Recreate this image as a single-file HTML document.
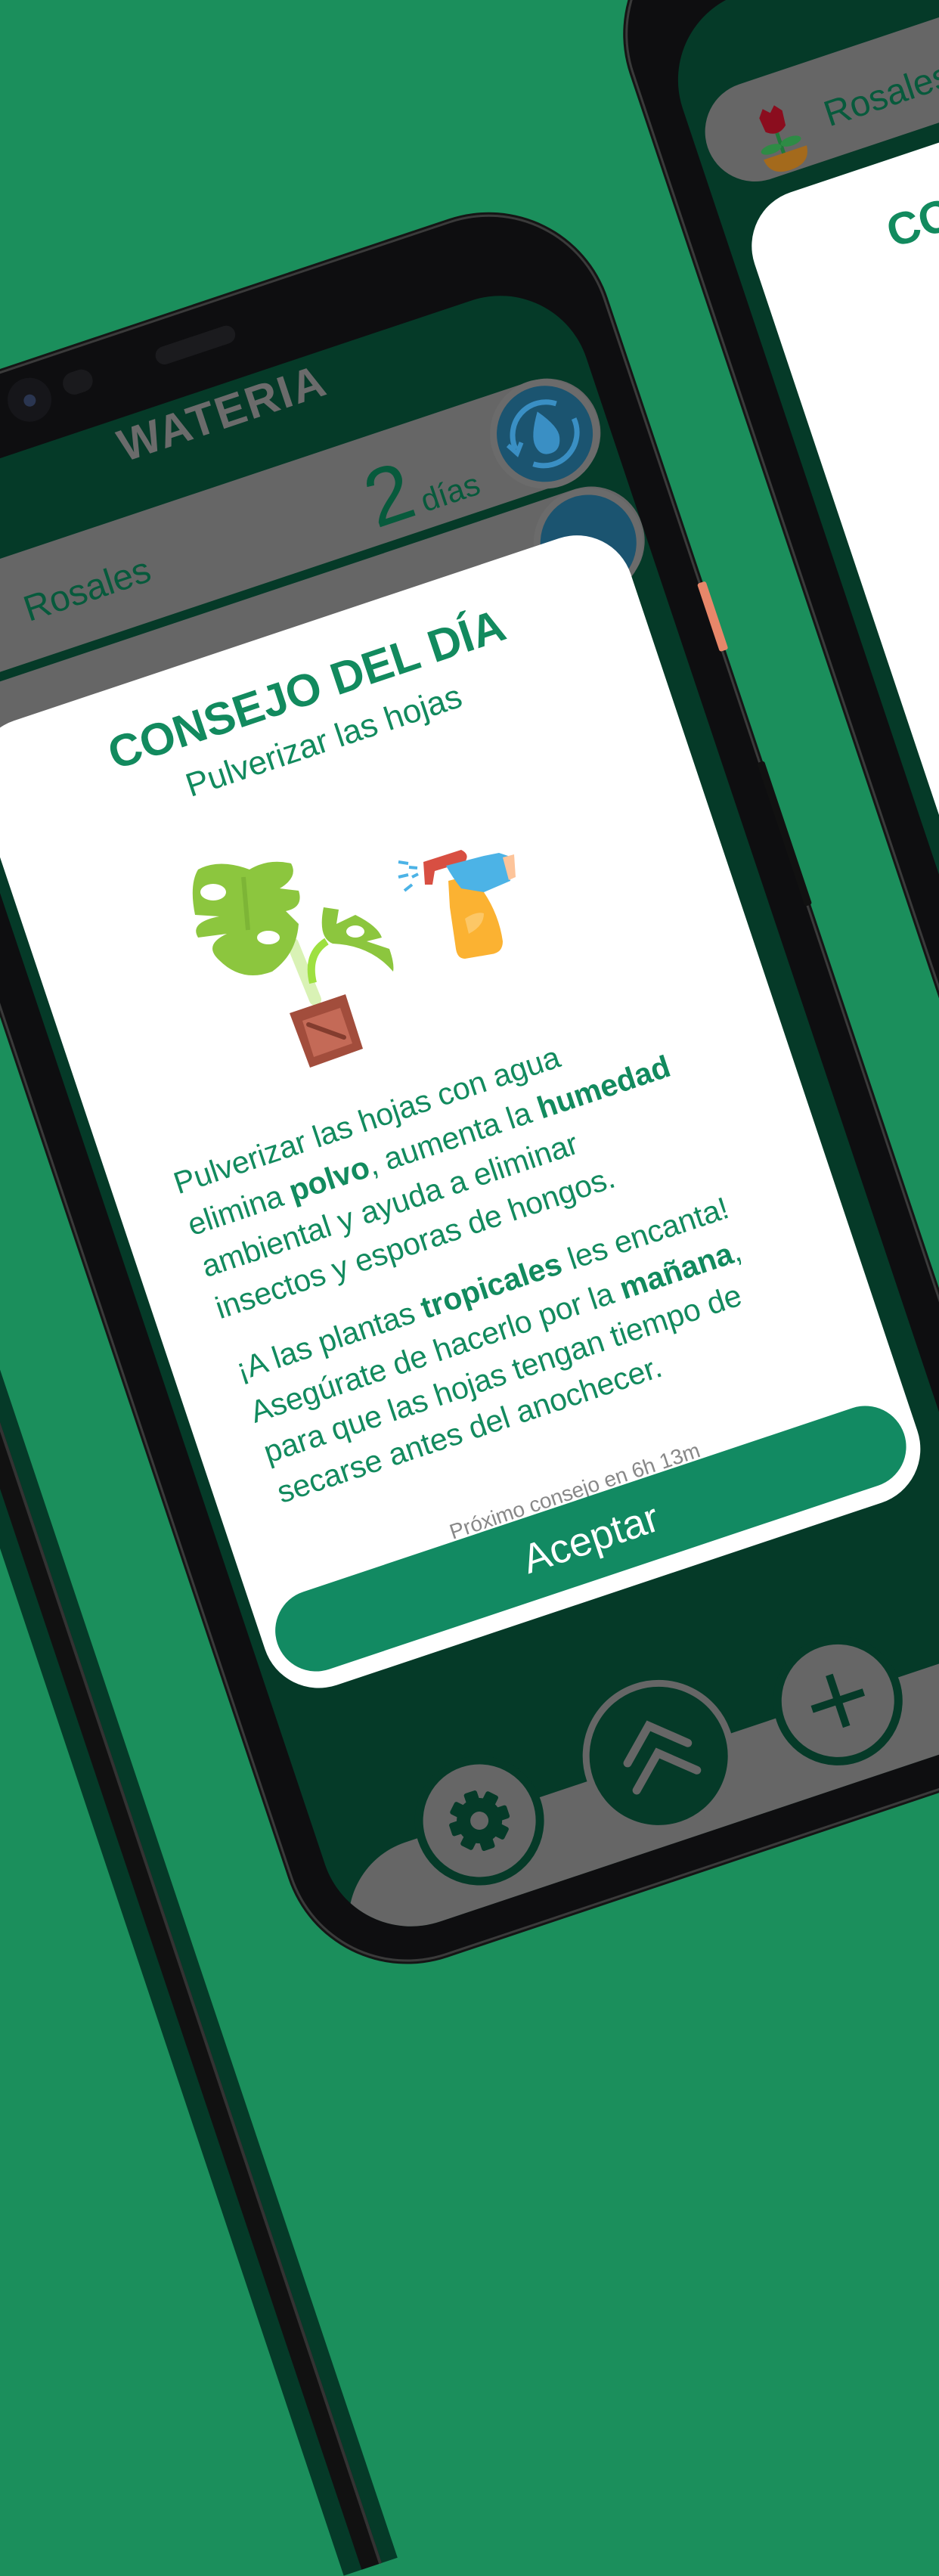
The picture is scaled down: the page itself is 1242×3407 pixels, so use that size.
<!DOCTYPE html>
<html><head><meta charset="utf-8">
<style>
*{margin:0;padding:0;box-sizing:border-box}
html,body{width:1242px;height:2688px;overflow:hidden;background:#1b8f5c;font-family:"Liberation Sans",sans-serif}
.ph{position:absolute;width:960px;height:2020px;transform-origin:0 0;transform:rotate(-18.5deg)}
.bez{position:absolute;left:-46px;top:-106px;width:1052px;height:2168px;border-radius:160px;background:#0e0e10;box-shadow:0 0 0 3px #3a3a3a,0 0 0 6px #151515}
.scr{position:absolute;left:0;top:0;width:960px;height:2020px;border-radius:120px;background:#053a28;overflow:hidden}
.pill{position:absolute;background:#666;border-radius:70px}
.card{position:absolute;background:#fff;border-radius:75px;overflow:hidden}
.t{position:absolute;white-space:nowrap;color:#128a5e}
.c{left:0;width:100%;text-align:center}
b{font-weight:bold}
</style></head><body>

<!-- right phone -->
<div class="ph" style="left:865px;top:30px">
  <div class="bez"></div>
  <div class="scr">
    <div class="pill" style="left:15px;top:113px;width:1100px;height:132px"></div>
    <svg style="position:absolute;left:70px;top:150px" width="80" height="95" viewBox="0 0 80 95">
      <path d="M38 40 L38 70" stroke="#1f7a3a" stroke-width="5"/>
      <ellipse cx="24" cy="58" rx="14" ry="6" fill="#2e8b45"/><ellipse cx="52" cy="56" rx="14" ry="6" fill="#2e8b45"/>
      <path d="M22 14 L30 4 L38 12 L46 4 L54 14 L52 34 Q38 46 24 34Z" fill="#8b0d1e"/>
      <path d="M10 68 L70 68 Q68 92 40 92 Q12 92 10 68Z" fill="#a46a1c"/>
    </svg>
    <div class="t" style="left:176px;top:161px;font-size:48px;color:#075a3c">Rosales</div>
    <div class="card" style="left:25px;top:270px;width:910px;height:1340px">
      <div class="t c" style="top:58px;font-size:60px;font-weight:bold;line-height:70px">CONSEJO DEL DÍA</div>
      <div class="t c" style="top:138px;font-size:44px">Beneficios del abono</div>
    </div>
  </div>
</div>

<!-- main phone -->
<div class="ph" style="left:-173px;top:664px">
  <div style="position:absolute;left:-275px;top:-600px;width:75px;height:3400px;background:#053a28"></div>
  <div style="position:absolute;left:-250px;top:-600px;width:28px;height:3400px;background:#111;border-right:4px solid #333"></div>
  <div class="bez"></div>
  <div style="position:absolute;left:1004px;top:450px;width:12px;height:95px;background:#e7876a;border-radius:3px"></div>
  <div style="position:absolute;left:1004px;top:700px;width:10px;height:200px;background:#111;border-radius:3px"></div>
  <div style="position:absolute;left:420px;top:-72px;width:110px;height:24px;border-radius:12px;background:#1b1b1e"></div>
  <div style="position:absolute;left:215px;top:-90px;width:58px;height:58px;border-radius:50%;background:#16161a"></div>
  <div style="position:absolute;left:236px;top:-68px;width:16px;height:16px;border-radius:50%;background:#2a3550"></div>
  <div style="position:absolute;left:292px;top:-78px;width:40px;height:30px;border-radius:15px;background:#1a1a1d"></div>
  <div class="scr">
    <div class="t c" style="top:4px;font-size:60px;font-weight:bold;color:#6b6b6b;line-height:66px;letter-spacing:2px">WATERIA</div>
    <div class="pill" style="left:-60px;top:126px;width:1010px;height:142px"></div>
    <div class="pill" style="left:-60px;top:280px;width:1020px;height:142px"></div>
    <svg style="position:absolute;left:20px;top:160px" width="100" height="90" viewBox="0 0 100 90"><path d="M20 40 L90 40 Q86 85 55 85 Q24 85 20 40Z" fill="#a46a1c"/></svg>
    <div class="t" style="left:150px;top:174px;font-size:48px;color:#075a3c">Rosales</div>
    <div class="t" style="left:625px;top:155px;color:#075a3c;display:flex;align-items:baseline"><span style="font-size:108px;line-height:108px">2</span><span style="font-size:42px;margin-left:8px">días</span></div>
    <svg style="position:absolute;left:803px;top:125px" width="146" height="146" viewBox="0 0 146 146">
      <circle cx="73" cy="73" r="68" fill="#1b5470" stroke="#6b6b6b" stroke-width="9"/>
      <path d="M30 80 A44 44 0 0 1 100 40" fill="none" stroke="#3a8fc4" stroke-width="7"/>
      <path d="M116 66 A44 44 0 0 1 46 106" fill="none" stroke="#3a8fc4" stroke-width="7"/>
      <path d="M22 72 L30 86 L40 74" fill="none" stroke="#3a8fc4" stroke-width="6"/>
      <path d="M73 42 Q94 70 90 84 Q86 100 73 100 Q58 100 56 84 Q54 70 73 42Z" fill="#3a8fc4"/>
    </svg>
    <svg style="position:absolute;left:812px;top:280px" width="146" height="146" viewBox="0 0 146 146"><circle cx="73" cy="73" r="68" fill="#1b5470" stroke="#6b6b6b" stroke-width="9"/></svg>

    <!-- bottom nav -->
    <div style="position:absolute;left:0;top:1906px;width:960px;height:140px;background:#666;border-top-left-radius:110px"></div>
    <svg style="position:absolute;left:0;top:1780px" width="960" height="240" viewBox="0 1780 960 240">
      <circle cx="212" cy="1910" r="80" fill="#666" stroke="#053a28" stroke-width="11"/>
      <g transform="translate(212 1910)" fill="#053a28">
        <rect x="-9" y="-40" width="18" height="80" rx="3"/>
        <rect x="-9" y="-40" width="18" height="80" rx="3" transform="rotate(45)"/>
        <rect x="-9" y="-40" width="18" height="80" rx="3" transform="rotate(90)"/>
        <rect x="-9" y="-40" width="18" height="80" rx="3" transform="rotate(135)"/>
        <circle r="30"/><circle r="12" fill="#666"/>
      </g>
      <circle cx="464" cy="1904" r="96" fill="#053a28" stroke="#666" stroke-width="9"/>
      <g transform="translate(464 1904)" fill="none" stroke="#666" stroke-width="11" stroke-linecap="round">
        <path d="M-42 -4 L0 -42 L42 -4"/><path d="M-42 34 L0 -4 L42 34"/>
      </g>
      <circle cx="712" cy="1910" r="80" fill="#666" stroke="#053a28" stroke-width="11"/>
      <g transform="translate(712 1910)" stroke="#053a28" stroke-width="10"><path d="M-36 0 L36 0 M0 -36 L0 36"/></g>
    </svg>

    <!-- card -->
    <div class="card" style="left:15px;top:335px;width:910px;height:1345px">
      <div class="t c" style="top:49px;font-size:60px;font-weight:bold;line-height:70px">CONSEJO DEL DÍA</div>
      <div class="t c" style="top:130px;font-size:44px;line-height:52px">Pulverizar las hojas</div>
      <div class="t" style="left:82px;top:620px;font-size:41px;line-height:58px">Pulverizar las hojas con agua<br>elimina <b>polvo</b>, aumenta la <b>humedad</b><br>ambiental y ayuda a eliminar<br>insectos y esporas de hongos.</div>
      <div class="t" style="left:82px;top:880px;font-size:41px;line-height:58px">¡A las plantas <b>tropicales</b> les encanta!</div>
      <div class="t" style="left:82px;top:940px;font-size:41px;line-height:56px">Asegúrate de hacerlo por la <b>mañana</b>,<br>para que las hojas tengan tiempo de<br>secarse antes del anochecer.</div>
      <div class="t c" style="top:1186px;font-size:28px;color:#888">Próximo consejo en 6h 13m</div>
      <div style="position:absolute;left:18px;top:1214px;width:874px;height:108px;border-radius:54px;background:#128a62;color:#fff;font-size:54px;line-height:108px;text-align:center">Aceptar</div>
    </div>
  </div>
</div>

<!-- illustration (global coords) -->
<svg style="position:absolute;left:200px;top:1080px" width="520" height="360" viewBox="200 1080 520 360">
  <path d="M417 1322 L387 1248" stroke="#d9f2b5" stroke-width="16" stroke-linecap="round"/>
  <path d="M414 1300 Q405 1262 432 1245" fill="none" stroke="#9ee040" stroke-width="10"/>
  <path d="M262 1150 Q290 1135 330 1150 Q355 1135 385 1142 Q395 1160 370 1175 L395 1178 Q402 1200 378 1205 L395 1222 Q392 1262 360 1285 Q320 1300 290 1270 Q268 1250 300 1235 L262 1240 Q250 1220 290 1212 L258 1210 Q250 1170 262 1150Z" fill="#8cc63e"/>
  <ellipse cx="282" cy="1180" rx="17" ry="11" fill="#fff"/>
  <ellipse cx="355" cy="1240" rx="15" ry="9" fill="#fff"/>
  <path d="M322 1160 L328 1230" stroke="#7db536" stroke-width="6"/>
  <path d="M428 1200 L448 1203 L445 1222 L470 1210 Q500 1225 505 1240 L485 1245 L515 1255 Q522 1275 520 1285 Q490 1250 440 1248 Q420 1240 428 1200Z" fill="#8cc63e"/>
  <ellipse cx="470" cy="1232" rx="12" ry="8" fill="#fff"/>
  <path d="M383 1340 L457 1315 L480 1387 L410 1412Z" fill="#a24d3c"/>
  <path d="M400 1350 L450 1333 L466 1380 L415 1398Z" fill="#c46a57"/>
  <path d="M408 1355 L455 1372" stroke="#833c2e" stroke-width="6" stroke-linecap="round"/>
  <path d="M593 1165 L620 1158 L640 1180 Q660 1210 665 1245 Q665 1260 650 1262 L615 1268 Q605 1268 603 1255 L595 1200Z" fill="#fbb232"/>
  <path d="M615 1215 Q630 1205 640 1208 Q640 1225 620 1235Z" fill="#fcc766"/>
  <path d="M560 1140 L610 1124 Q622 1130 615 1140 L575 1152 L572 1170 L562 1170Z" fill="#d84f42"/>
  <path d="M590 1145 L640 1132 L660 1128 L672 1132 L675 1165 L640 1180 L610 1175 Q598 1160 590 1145Z" fill="#4cb3e6"/>
  <path d="M665 1134 L680 1130 L682 1160 L673 1164Z" fill="#fdc49a"/>
  <path d="M527 1140 L540 1142 M541 1147 L552 1148 M527 1160 L540 1157 M545 1160 L553 1156 M535 1178 L545 1170" stroke="#4cb3e6" stroke-width="4"/>
</svg>
</body></html>
